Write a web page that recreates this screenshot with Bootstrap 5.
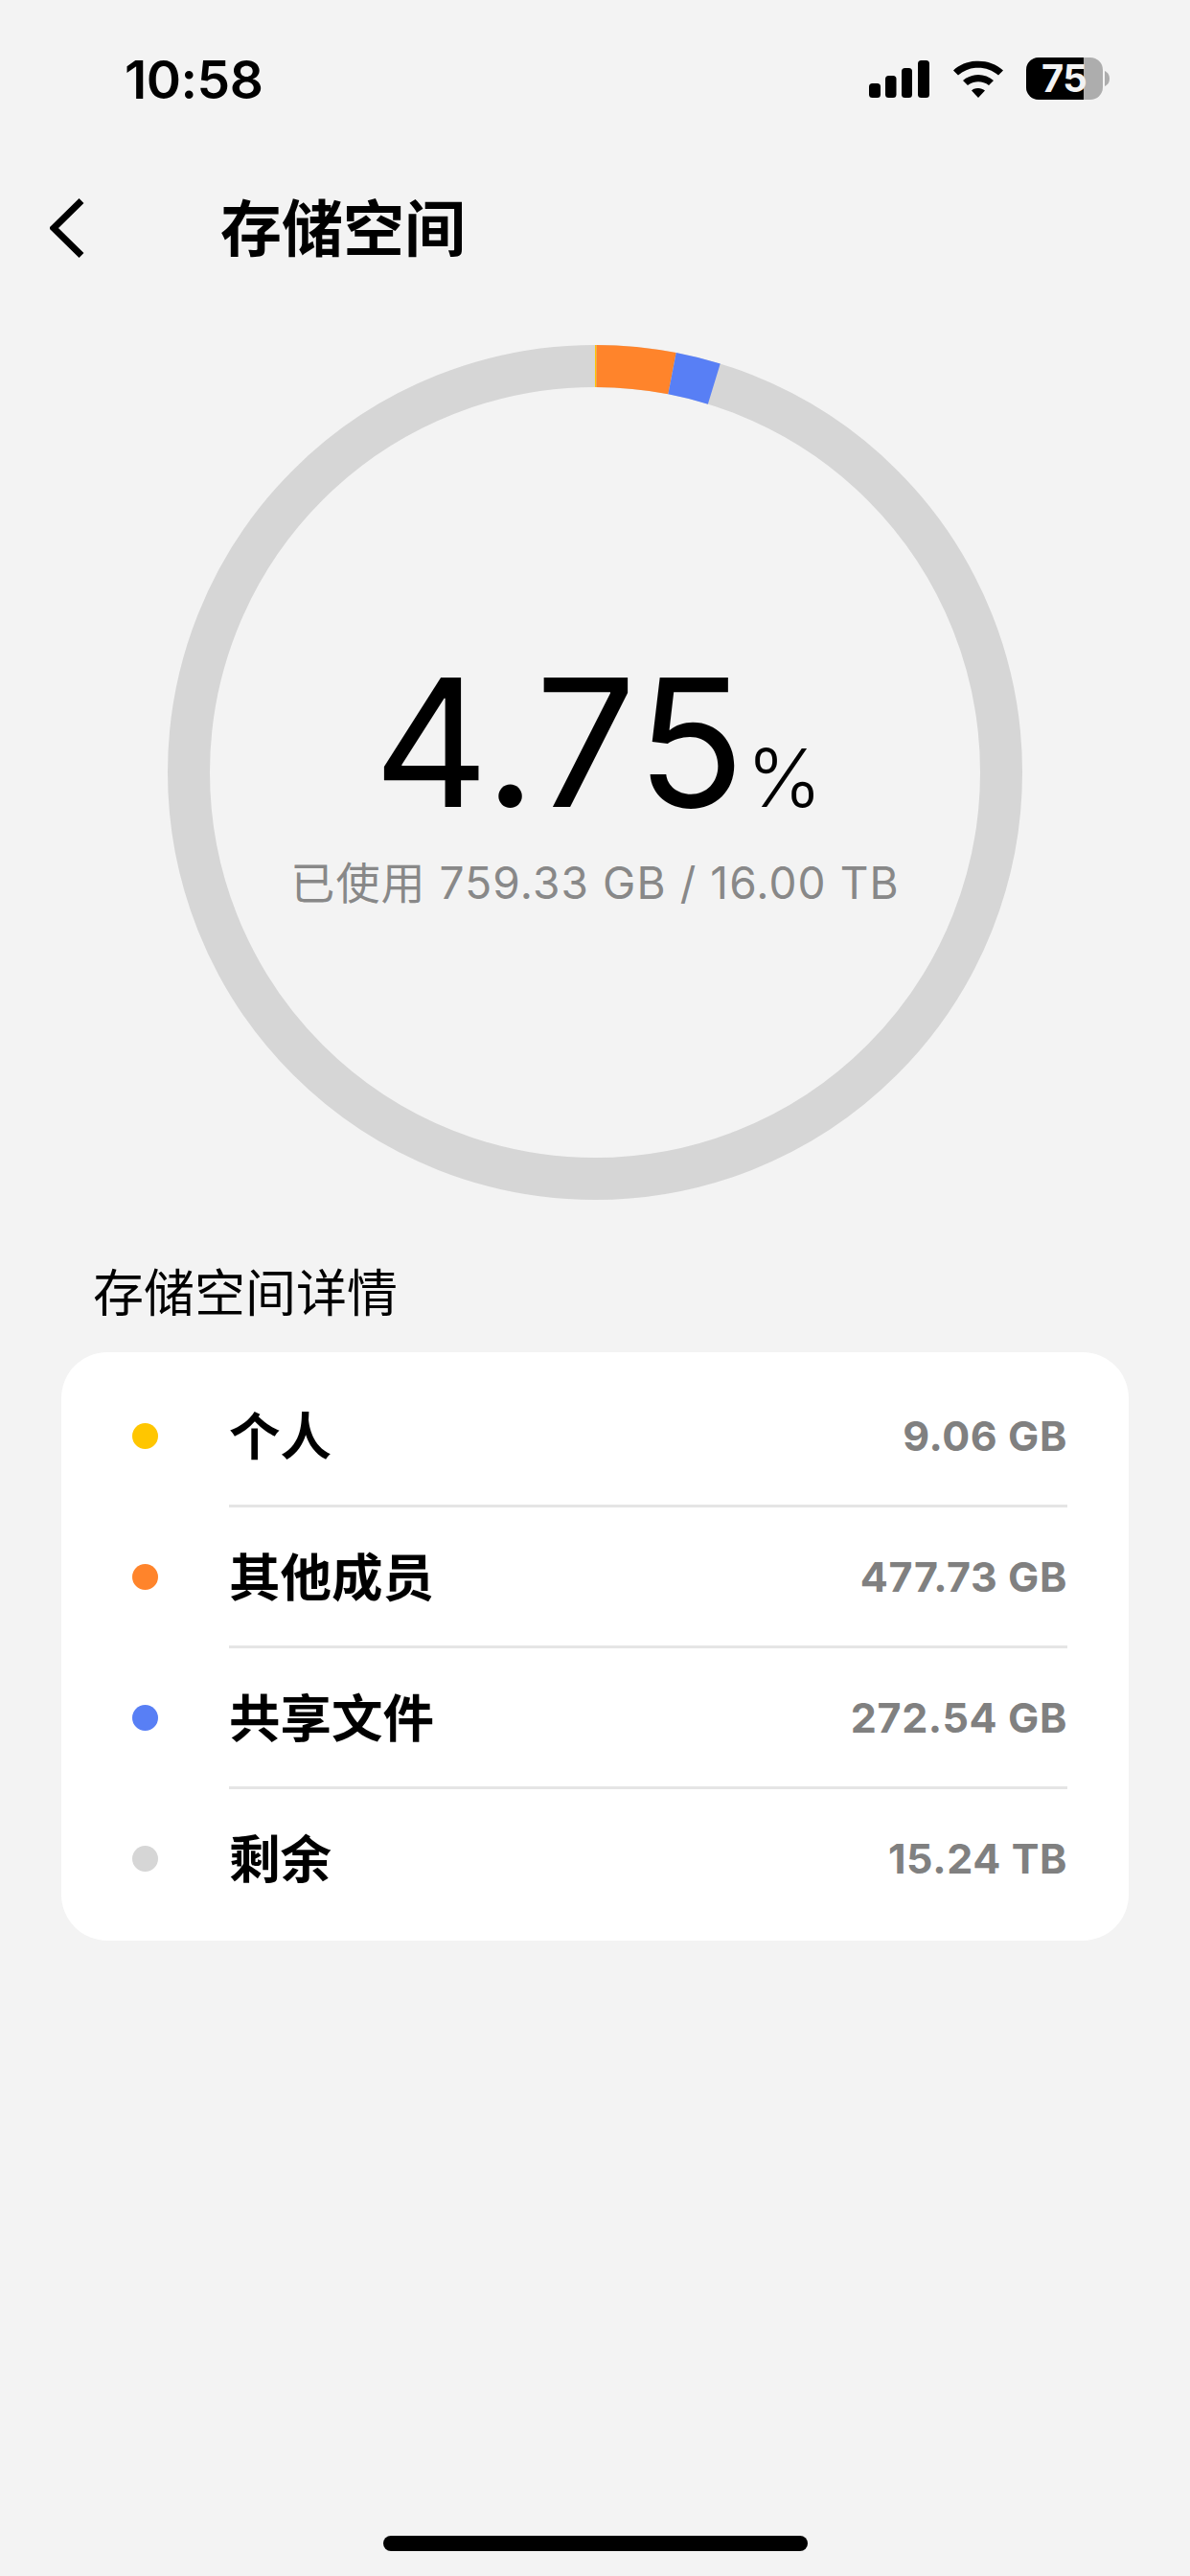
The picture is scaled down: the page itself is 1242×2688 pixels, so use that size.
<!DOCTYPE html>
<html lang="zh">
<head>
<meta charset="utf-8">
<title>存储空间</title>
<link rel="stylesheet" href="https://cdn.jsdelivr.net/npm/bootstrap@5.3.0/dist/css/bootstrap.min.css">
<style>
html,body{background:#f3f3f3;}
.app-screen{width:1242px;height:2688px;background:#f3f3f3;color:#000;font-family:Inter,"Noto Sans CJK SC",sans-serif;overflow:hidden;}
.status-row{height:120px;padding:60px 84px 0 130px;}
.clock-text{font-family:Inter,sans-serif;font-weight:600;font-size:55px;line-height:46px;letter-spacing:-.5px;}
.status-icons{gap:23px;height:44px;}
.batt-box{width:80px;height:44px;border-radius:13px;background:#adadad;}
.batt-fill{width:60px;background:#000;border-radius:13px 0 0 13px;}
.batt-num{font-family:Inter,sans-serif;font-weight:700;font-size:40px;line-height:44px;color:#f3f3f3;padding-left:16px;letter-spacing:-.5px;}
.batt-tip{margin-left:2px;}
.nav-row{height:62px;margin-top:87px;padding-left:52px;}
.nav-title{font-size:64px;font-weight:700;line-height:62px;margin:-8px 0 0 142px;font-family:"Noto Sans CJK SC",sans-serif;}
.ring-stage{display:grid;justify-items:center;margin-top:91px;}
.ring-stage>*{grid-area:1/1;}
.ring-text{align-self:start;text-align:center;margin-top:322px;padding-left:6px;}
.big-pct{font-family:Inter,sans-serif;font-weight:400;font-size:186px;line-height:186px;letter-spacing:2px;}
.big-unit{font-size:84px;font-weight:300;letter-spacing:0;}
.used-line{font-size:46px;line-height:56px;color:#888;margin:-12px 0 0 -6px;letter-spacing:1.1px;font-family:Inter,"Noto Sans CJK SC",sans-serif;}
.detail-label{font-size:53px;line-height:64px;margin:62px 0 0 97px;font-family:"Noto Sans CJK SC",sans-serif;}
.detail-card{margin:33px 64px 0;height:614px;background:#fff;border-radius:48px;padding:12px 64px 0 0;}
.detail-line{height:147px;}
.detail-body{height:100%;border-top:3px solid transparent;font-size:53.5px;font-weight:700;font-family:"Noto Sans CJK SC",sans-serif;}
.detail-line+.detail-line .detail-body{border-top-color:#e5e5e5;}
.dot-cell{width:175px;padding:3px 0 0 74px;}
.dot-mark{width:27px;height:27px;border-radius:50%;}
.detail-name{margin-top:-3px;}
.detail-size{font-family:Inter,sans-serif;font-size:43px;font-weight:700;color:#808080;letter-spacing:.6px;}
.home-bar{width:443px;height:16px;border-radius:8px;background:#000;margin:0 auto;}
.home-wrap{margin-top:621px;}
</style>
</head>
<body class="m-0">
<div class="app-screen">
  <div class="status-row d-flex justify-content-between">
    <div class="clock-text">10:58</div>
    <div class="status-icons d-flex align-items-start">
      <svg width="64" height="44" viewBox="0 0 64 44"><g fill="#000"><rect x="0" y="27" width="12" height="15" rx="3.5"/><rect x="17" y="19" width="11.5" height="23" rx="3.5"/><rect x="34" y="11" width="11" height="31" rx="3.5"/><rect x="51" y="3" width="12" height="39" rx="3.5"/></g></svg>
      <svg width="54" height="44" viewBox="0 0 54 44"><path d="M1 13.5C15 .5 39 .5 53 13.5l-5 5C36 8 18 8 6 18.5Z M11 24C20 16 34 16 43 24l-5 5C31.500 24 22.500 24 16 29Z M20 34.500C24 31 30 31 34 34.500L27 42Z" fill="#000"/></svg>
      <div class="d-flex align-items-center">
        <div class="batt-box d-flex position-relative">
          <div class="batt-fill"></div>
          <div class="batt-num position-absolute top-0 start-0">75</div>
        </div>
        <svg class="batt-tip" width="5" height="16" viewBox="0 0 5 16"><path d="M0 0C4 2 5 5 5 8S4 14 0 16Z" fill="#adadad"/></svg>
      </div>
    </div>
  </div>
  <div class="nav-row d-flex align-items-center">
    <svg width="36" height="62" viewBox="0 0 36 62"><path d="M33 2.500 4 31l29 28.500" fill="none" stroke="#000" stroke-width="7"/></svg>
    <div class="nav-title">存储空间</div>
  </div>
  <div class="ring-stage">
    <svg width="892" height="892" viewBox="-446 -446 892 892">
      <circle r="424" fill="none" stroke="#d6d6d6" stroke-width="44"/>
      <g fill="none" stroke-width="44" transform="rotate(-90)">
        <circle r="424" stroke="#ffc600" pathLength="360" stroke-dasharray="0.2 359.8"/>
        <circle r="424" stroke="#ff842b" pathLength="360" stroke-dasharray="10.75 349.25" stroke-dashoffset="-0.2"/>
        <circle r="424" stroke="#587ff5" pathLength="360" stroke-dasharray="6.1 353.9" stroke-dashoffset="-10.95"/>
      </g>
    </svg>
    <div class="ring-text">
      <div class="big-pct">4.75<span class="big-unit">%</span></div>
      <div class="used-line">已使用 759.33 GB / 16.00 TB</div>
    </div>
  </div>
  <div class="detail-label">存储空间详情</div>
  <div class="detail-card">
    <div class="detail-line d-flex align-items-stretch">
      <div class="dot-cell d-flex align-items-center"><span class="dot-mark" style="background:#ffc600"></span></div>
      <div class="detail-body flex-grow-1 d-flex align-items-center justify-content-between"><span class="detail-name">个人</span><span class="detail-size">9.06 GB</span></div>
    </div>
    <div class="detail-line d-flex align-items-stretch">
      <div class="dot-cell d-flex align-items-center"><span class="dot-mark" style="background:#ff842b"></span></div>
      <div class="detail-body flex-grow-1 d-flex align-items-center justify-content-between"><span class="detail-name">其他成员</span><span class="detail-size">477.73 GB</span></div>
    </div>
    <div class="detail-line d-flex align-items-stretch">
      <div class="dot-cell d-flex align-items-center"><span class="dot-mark" style="background:#587ff5"></span></div>
      <div class="detail-body flex-grow-1 d-flex align-items-center justify-content-between"><span class="detail-name">共享文件</span><span class="detail-size">272.54 GB</span></div>
    </div>
    <div class="detail-line d-flex align-items-stretch">
      <div class="dot-cell d-flex align-items-center"><span class="dot-mark" style="background:#d6d6d6"></span></div>
      <div class="detail-body flex-grow-1 d-flex align-items-center justify-content-between"><span class="detail-name">剩余</span><span class="detail-size">15.24 TB</span></div>
    </div>
  </div>
  <div class="home-wrap"><div class="home-bar"></div></div>
</div>
<script src="https://cdn.jsdelivr.net/npm/bootstrap@5.3.0/dist/js/bootstrap.bundle.min.js"></script>
</body>
</html>
